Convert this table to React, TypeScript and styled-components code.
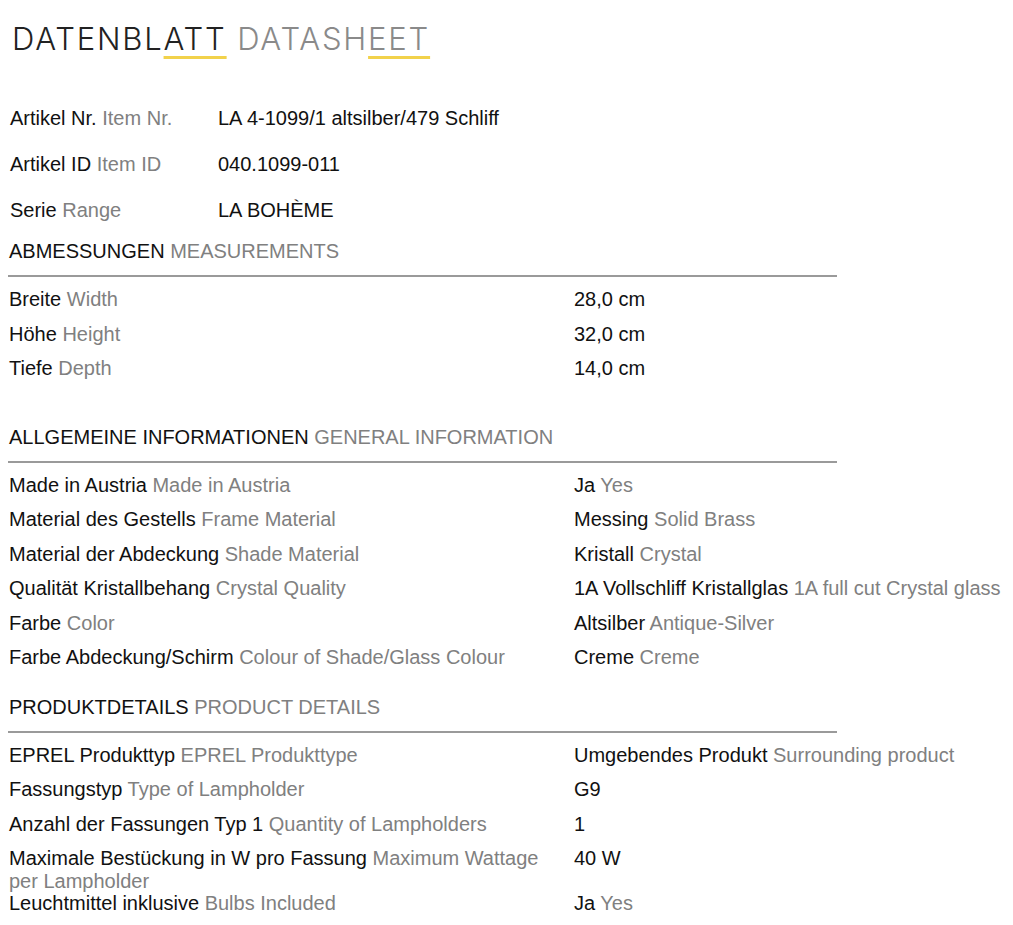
import React from "react";
import styled, { createGlobalStyle } from "styled-components";

const GlobalStyle = createGlobalStyle`
  html, body {
    margin: 0;
    padding: 0;
    background: #ffffff;
  }
  body {
    font-family: "Liberation Sans", Arial, sans-serif;
    font-size: 20px;
    color: #111111;
  }
`;

type Pair = { de: string; en?: string };
type Row = { label: Pair; value: Pair; height?: number };
type Section = { title: Pair; rows: Row[]; spaceAbove: number };

const topInfo: { label: Pair; value: string }[] = [
    { label: { de: "Artikel Nr.", en: "Item Nr." }, value: "LA 4-1099/1 altsilber/479 Schliff" },
    { label: { de: "Artikel ID", en: "Item ID" }, value: "040.1099-011" },
    { label: { de: "Serie", en: "Range" }, value: "LA BOHÈME" },
];

const sections: Section[] = [
    {
        title: { de: "ABMESSUNGEN", en: "MEASUREMENTS" },
        spaceAbove: 7,
        rows: [
            { label: { de: "Breite", en: "Width" }, value: { de: "28,0 cm" } },
            { label: { de: "Höhe", en: "Height" }, value: { de: "32,0 cm" } },
            { label: { de: "Tiefe", en: "Depth" }, value: { de: "14,0 cm" } },
        ],
    },
    {
        title: { de: "ALLGEMEINE INFORMATIONEN", en: "GENERAL INFORMATION" },
        spaceAbove: 40,
        rows: [
            { label: { de: "Made in Austria", en: "Made in Austria" }, value: { de: "Ja", en: "Yes" } },
            { label: { de: "Material des Gestells", en: "Frame Material" }, value: { de: "Messing", en: "Solid Brass" } },
            { label: { de: "Material der Abdeckung", en: "Shade Material" }, value: { de: "Kristall", en: "Crystal" } },
            { label: { de: "Qualität Kristallbehang", en: "Crystal Quality" }, value: { de: "1A Vollschliff Kristallglas", en: "1A full cut Crystal glass" } },
            { label: { de: "Farbe", en: "Color" }, value: { de: "Altsilber", en: "Antique-Silver" } },
            { label: { de: "Farbe Abdeckung/Schirm", en: "Colour of Shade/Glass Colour" }, value: { de: "Creme", en: "Creme" } },
        ],
    },
    {
        title: { de: "PRODUKTDETAILS", en: "PRODUCT DETAILS" },
        spaceAbove: 21,
        rows: [
            { label: { de: "EPREL Produkttyp", en: "EPREL Produkttype" }, value: { de: "Umgebendes Produkt", en: "Surrounding product" } },
            { label: { de: "Fassungstyp", en: "Type of Lampholder" }, value: { de: "G9" } },
            { label: { de: "Anzahl der Fassungen Typ 1", en: "Quantity of Lampholders" }, value: { de: "1" } },
            { label: { de: "Maximale Bestückung in W pro Fassung", en: "Maximum Wattage per Lampholder" }, value: { de: "40 W" }, height: 45 },
            { label: { de: "Leuchtmittel inklusive", en: "Bulbs Included" }, value: { de: "Ja", en: "Yes" } },
        ],
    },
];

function Bilingual({ de, en }: Pair): JSX.Element {
    return (
        <>
            {de}
            {en && <Muted> {en}</Muted>}
        </>
    );
}

function App(): JSX.Element {
    return (
        <Page>
            <GlobalStyle />
            <Title>
                DATENBL<Mark>ATT</Mark> <TitleMuted>DATASH<Mark>EET</Mark></TitleMuted>
            </Title>

            <TopTable>
                {topInfo.map((item) => (
                    <TopRow key={item.label.de}>
                        <TopLabel>
                            <Bilingual {...item.label} />
                        </TopLabel>
                        <span>{item.value}</span>
                    </TopRow>
                ))}
            </TopTable>

            {sections.map((section) => (
                <SectionBlock key={section.title.de} $space={section.spaceAbove}>
                    <SectionTitle>
                        <Bilingual {...section.title} />
                    </SectionTitle>
                    {section.rows.map((row) => (
                        <DataRow key={row.label.de} $h={row.height}>
                            <DataLabel>
                                <Bilingual {...row.label} />
                            </DataLabel>
                            <DataValue>
                                <Bilingual {...row.value} />
                            </DataValue>
                        </DataRow>
                    ))}
                </SectionBlock>
            ))}
        </Page>
    );
}

const Page = styled.div`
    padding: 0 0 0 9px;
    width: 1004px;
`

const Title = styled.h1`
    margin: 0 0 0 3px;
    padding-top: 19px;
    font-family: Inter, "Liberation Sans", sans-serif;
    font-weight: 300;
    font-size: 31px;
    line-height: 40px;
    letter-spacing: 1.8px;
    color: #222222;
    white-space: nowrap;
`

const TitleMuted = styled.span`
    color: #8a8a8a;
`

const Mark = styled.span`
    text-decoration: underline;
    text-decoration-color: #f2d24b;
    text-decoration-thickness: 3px;
    text-underline-offset: 6px;
`

const Muted = styled.span`
    color: #808080;
`

const TopTable = styled.div`
    margin-top: 36px;
    display: flex;
    flex-direction: column;
`

const TopRow = styled.div`
    display: grid;
    grid-template-columns: 208px 1fr;
    height: 46px;
    align-items: center;
    line-height: 23px;
    padding-left: 1px;
`

const TopLabel = styled.span`
    white-space: nowrap;
`

const SectionBlock = styled.section<{ $space: number }>`
    margin-top: ${(p) => p.$space}px;
`

const SectionTitle = styled.h2`
    margin: 0 0 5px 0;
    width: 828px;
    margin-left: -1px;
    padding: 0 0 12px 1px;
    border-bottom: 2px solid #9a9a9a;
    font-size: 20px;
    font-weight: 400;
    line-height: 23px;
    color: #111111;
`

const DataRow = styled.div<{ $h?: number }>`
    display: grid;
    grid-template-columns: 548px 1fr;
    column-gap: 17px;
    height: ${(p) => p.$h ?? 34.5}px;
    box-sizing: border-box;
    padding-top: 6px;
    line-height: 22.5px;
`

const DataLabel = styled.div``

const DataValue = styled.div`
    white-space: nowrap;
`

export default App;
